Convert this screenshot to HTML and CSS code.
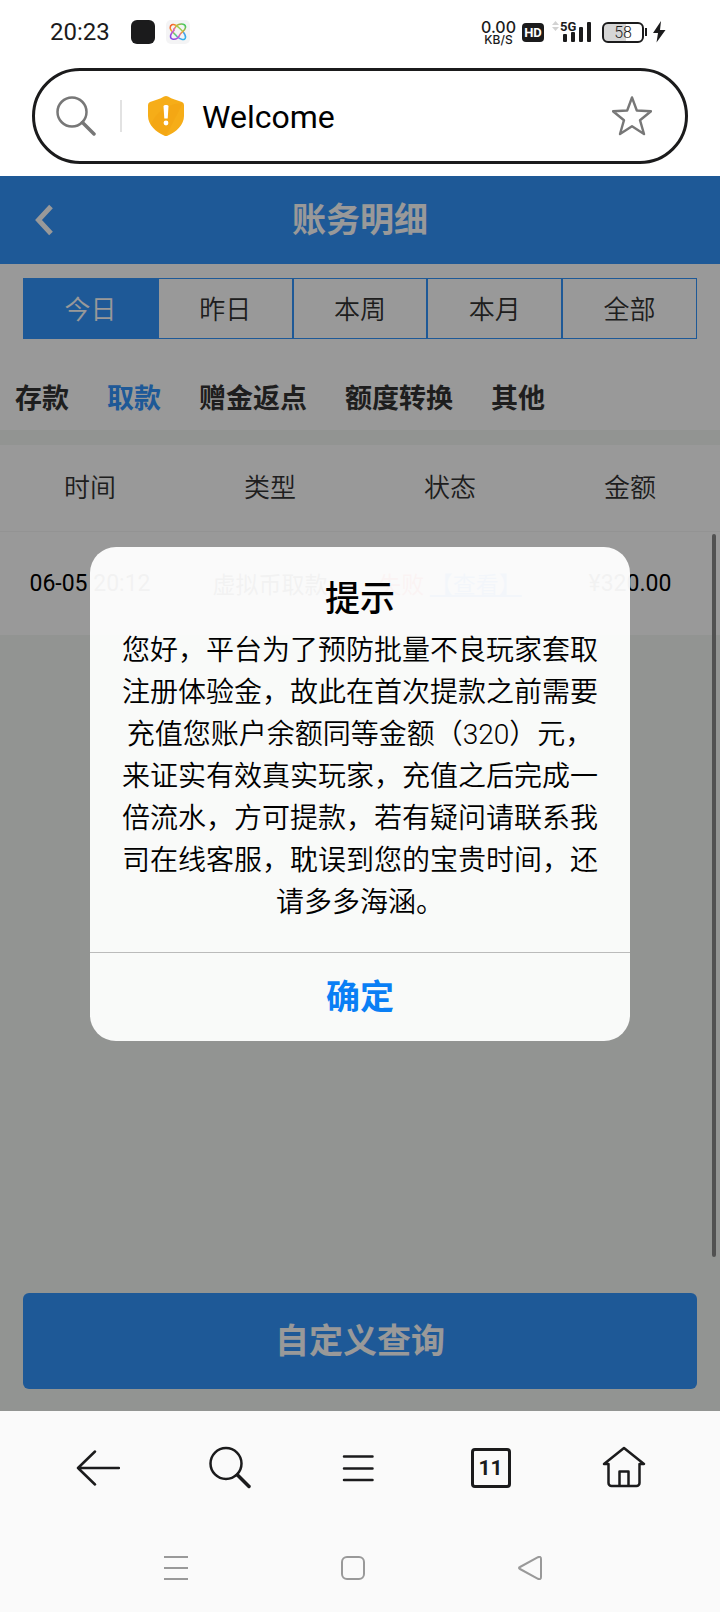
FILE: index.html
```html
<!DOCTYPE html>
<html lang="zh-CN">
<head>
<meta charset="utf-8">
<meta name="viewport" content="width=device-width, initial-scale=1">
<title>账务明细</title>
<link rel="stylesheet" href="styles.css">
</head>
<body>
<div class="status">
  <span class="clock">20:23</span>
  <span class="app-dot"></span>
  <svg class="app-icon" width="24" height="24" viewBox="0 0 24 24" fill="none">
    <defs><linearGradient id="rainbow" x1="4" y1="4" x2="20" y2="20" gradientUnits="userSpaceOnUse"><stop offset="0" stop-color="#f0402c"/><stop offset=".25" stop-color="#f5a52c"/><stop offset=".5" stop-color="#5fd08a"/><stop offset=".75" stop-color="#4a9df0"/><stop offset="1" stop-color="#20b8e8"/></linearGradient>
    <linearGradient id="violet" x1="5" y1="19" x2="19" y2="5" gradientUnits="userSpaceOnUse"><stop offset="0" stop-color="#7a45e8"/><stop offset=".4" stop-color="#d45ac8"/><stop offset=".65" stop-color="#f0a030"/><stop offset="1" stop-color="#3ecb60"/></linearGradient></defs>
    <rect width="24" height="24" rx="5" fill="#f4f4f5"/>
    <path d="M10 5.500C7 3.500 4 4.500 4.200 8C4.500 11 8 13 11 16.500C14 19.500 19 21 19.500 17.500C20 15 18 13 16.500 11" stroke="url(#rainbow)" stroke-width="1.600"/>
    <path d="M7 9.500C9.500 9 9 6 12 4.800C15 3.500 20 3.500 19.500 7.500C19 11 15.500 11.500 14 14.500C12.500 18 10 19.500 7 19.200C4 19 4 15.500 5.500 13.500C7 11.500 8 10.500 8.500 9.500" stroke="url(#violet)" stroke-width="1.600"/>
    <path d="M10 5.500C13 7 14.500 9.500 16.500 11" stroke="#9bcf50" stroke-width="1.500"/>
  </svg>
  <span class="speed"><b>0.00</b><small>KB/S</small></span>
  <span class="hd">HD</span>
  <svg class="signal" width="40" height="24" viewBox="0 0 40 24">
    <path d="M0 5l3.500-4L7 5zM0 7h7l-3.500 4z" fill="#d2d2d2"/>
    <text x="8" y="11" class="signal-text">5G</text>
    <g fill="#1b1b1c"><rect x="11" y="14" width="4" height="8" rx="1"/><rect x="19" y="12" width="4" height="10" rx="1"/><rect x="27" y="7" width="4" height="15" rx="1"/><rect x="35" y="2" width="4" height="20" rx="1"/></g>
  </svg>
  <span class="battery"><span>58</span></span>
  <svg width="14" height="22" viewBox="0 0 14 22"><path d="M9 0L1 12h5L4.500 21.500 13.500 9H8z" fill="#1b1b1c"/></svg>
</div>
<form class="address">
  <svg width="40" height="40" viewBox="0 0 40 40" fill="none" stroke="#777" stroke-width="2.500" stroke-linecap="round"><circle cx="16" cy="16" r="14.500"/><path d="M26.500 26.500L38 38" stroke-width="3.500"/></svg>
  <span class="rule"></span>
  <svg width="36" height="40" viewBox="0 0 36 40"><path d="M16 .6Q18-.4 20 .6C24 3 29 4.500 34 6Q36 7 36 9v11c0 9-8 16-16 19.400Q18 40.400 16 39.400C8 36 0 29 0 20V9Q0 7 2 6C7 4.500 12 3 16 .6z" fill="#f6ad18"/><path d="M3 28C8 17 17 8 35 7L18 40C10 36 5 32 3 28z" fill="#ed9d0c" opacity=".3"/><path d="M15.500 10.500q0-1.500 1.500-1.500h2q1.500 0 1.500 1.500l-.8 12h-3.400z" fill="#fff"/><circle cx="18" cy="27" r="2.400" fill="#fff"/></svg>
  <input class="url" type="text" value="Welcome" aria-label="地址栏">
  <button class="plain" type="button" aria-label="收藏"><svg width="40" height="40" viewBox="0 0 40 40" fill="none" stroke="#777" stroke-width="2.400" stroke-linejoin="round"><path d="M20 1.500L24.800 14.500 39 15.200 28 24.200 32 38 20 30.300 8 38 12 24.200 1 15.200 15.200 14.500z"/></svg></button>
</form>
<main class="page">
  <header class="title-bar">
    <button class="plain back" type="button" aria-label="返回"><svg width="18" height="32" viewBox="0 0 18 32" fill="none" stroke="#fff" stroke-width="5"><path d="M16 2.500L3.500 16 16 29.500"/></svg></button>
    <h1>账务明细</h1>
  </header>
  <section class="filters">
    <div class="dates">
      <button type="button" class="active">今日</button><button type="button">昨日</button><button type="button">本周</button><button type="button">本月</button><button type="button">全部</button>
    </div>
    <nav class="kinds">
      <a href="#">存款</a><a href="#" class="current">取款</a><a href="#">赠金返点</a><a href="#">额度转换</a><a href="#">其他</a>
    </nav>
  </section>
  <table class="records">
    <thead><tr><th>时间</th><th>类型</th><th>状态</th><th>金额</th></tr></thead>
    <tbody><tr><td>06-05 20:12</td><td>虚拟币取款</td><td><span class="failed">失败</span> <a href="#">【查看】</a></td><td>¥320.00</td></tr></tbody>
  </table>
  <footer class="query"><button type="button">自定义查询</button></footer>
  <span class="scroll-thumb"></span>
  <div class="mask">
    <div class="dialog" role="alertdialog" aria-labelledby="tip-title" aria-describedby="tip-text">
      <h2 id="tip-title">提示</h2>
      <p id="tip-text">您好，平台为了预防批量不良玩家套取注册体验金，故此在首次提款之前需要充值您账户余额同等金额（320）元，来证实有效真实玩家，充值之后完成一倍流水，方可提款，若有疑问请联系我司在线客服，耽误到您的宝贵时间，还请多多海涵。</p>
      <button type="button">确定</button>
    </div>
  </div>
</main>
<nav class="toolbar">
  <button class="plain" type="button" aria-label="后退"><svg width="44" height="44" viewBox="0 0 44 44"><path d="M43 22H2M19 5.500L2 22l17 16.500"/></svg></button>
  <button class="plain" type="button" aria-label="搜索"><svg width="44" height="44" viewBox="0 0 44 44"><circle cx="18" cy="17.500" r="15.500"/><path d="M29.500 29L41 40.500" stroke-width="3.500"/></svg></button>
  <button class="plain" type="button" aria-label="菜单"><svg width="44" height="44" viewBox="0 0 44 44"><path d="M5 10.500h28.500M5 22.500h28.500M5 34h28.500"/></svg></button>
  <button class="plain" type="button" aria-label="标签页"><span class="tab-count">11</span></button>
  <button class="plain" type="button" aria-label="主页"><svg width="44" height="44" viewBox="0 0 44 44"><path d="M2 18L22 2l20 16h-4.500v19a3 3 0 0 1-3 3h-25a3 3 0 0 1-3-3V18zM17.500 40V25.500h9V40"/></svg></button>
</nav>
<nav class="system">
  <button class="plain" type="button" aria-label="最近任务"><svg width="24" height="24" viewBox="0 0 24 24"><path d="M0 1h24M0 12h24M0 23h24"/></svg></button>
  <button class="plain" type="button" aria-label="桌面"><svg width="24" height="24" viewBox="0 0 24 24"><rect x="1" y="1" width="22" height="22" rx="5"/></svg></button>
  <button class="plain" type="button" aria-label="返回上一级"><svg width="24" height="24" viewBox="0 0 24 24"><path d="M2 11L20 1.200Q23 0 23 3v18q0 3-3 1.800L2 13Q0 12 2 11z"/></svg></button>
</nav>
</body>
</html>
```
FILE: styles.css
```css
* { box-sizing: border-box; }

body {
  margin: 0;
  min-height: 100vh;
  display: flex;
  flex-direction: column;
  background: #fff;
  color: #000;
  font-family: Roboto, "Noto Sans CJK SC", sans-serif;
}

button, input { font: inherit; color: inherit; }
svg { display: block; flex: none; }
a { color: inherit; text-decoration: none; }

.plain {
  flex: none;
  padding: 0;
  border: 0;
  background: none;
}

/* Status bar */
.status {
  display: flex;
  align-items: center;
  height: 68px;
  padding: 0 54px 4px 50px;
  color: #1b1b1c;
}
.clock { font-size: 24px; }
.app-dot {
  width: 24px;
  height: 24px;
  margin-left: 21px;
  border-radius: 6px;
  background: #1b1b1c;
}
.app-icon { margin-left: 11px; }
.speed {
  display: flex;
  flex-direction: column;
  align-items: center;
  margin-left: auto;
  padding-top: 2px;
  font-family: Inter, sans-serif;
}
.speed b { font-size: 16px; font-weight: 500; line-height: 14px; }
.speed small { font-size: 12px; font-weight: 500; line-height: 12px; }
.hd {
  width: 22px;
  margin-left: 6px;
  border-radius: 4px;
  background: #1b1b1c;
  color: #fff;
  font-size: 13px;
  font-weight: 700;
  line-height: 19px;
  text-align: center;
}
.signal { margin-left: 8px; }
.signal-text { font: 700 13px Roboto, sans-serif; fill: #1b1b1c; }
.battery {
  display: flex;
  align-items: center;
  margin: 0 5px 0 10px;
}
.battery span {
  width: 42px;
  border: 2px solid #1b1b1c;
  border-radius: 6px;
  background: linear-gradient(90deg, #d6d6d6 58%, #fff 58%);
  font-size: 16px;
  font-weight: 300;
  line-height: 17px;
  text-align: center;
}
.battery::after {
  content: "";
  width: 2px;
  height: 8px;
  margin-left: 1px;
  background: #1b1b1c;
}

/* Address bar */
.address {
  display: flex;
  align-items: center;
  height: 96px;
  margin: 0 32px 12px;
  padding: 0 33px 0 21px;
  border: 3px solid #1b1b1c;
  border-radius: 48px;
}
.rule {
  width: 2px;
  height: 32px;
  margin: 0 26px 0 24px;
  background: #e2e2e2;
}
.url {
  flex: 1;
  min-width: 0;
  margin-left: 18px;
  padding: 2px 0 0;
  border: 0;
  outline: 0;
  background: none;
  font-size: 32px;
}

/* Page */
.page {
  position: relative;
  flex: 1;
  display: flex;
  flex-direction: column;
  background: #f4f7f4;
}
.title-bar {
  display: grid;
  grid-template-columns: 1fr auto 1fr;
  align-items: center;
  height: 88px;
  padding: 0 35px;
  background: #3394fc;
  color: #fff;
}
.title-bar h1 {
  margin: 0;
  font-size: 34px;
  font-weight: 700;
  line-height: 48px;
}
.back { justify-self: start; }
.filters {
  padding: 14px 0 11px;
  background: #fff;
}
.dates {
  display: grid;
  grid-template-columns: repeat(5, 1fr);
  margin: 0 23px;
}
.dates button {
  height: 61px;
  padding: 0 0 2px;
  border: 1px solid #3394fc;
  border-radius: 0;
  background: #fff;
  color: #333;
  font-size: 26px;
  font-weight: 350;
}
.dates .active { background: #3394fc; color: #fff; }
.kinds {
  display: flex;
  gap: 38px;
  padding: 40px 15px 0;
  color: #333;
  font-size: 27px;
  font-weight: 700;
  line-height: 40px;
}
.kinds .current { color: #3394fc; }

.records {
  width: 100%;
  margin-top: 15px;
  border-collapse: collapse;
  table-layout: fixed;
  background: #fff;
  text-align: center;
}
.records th, .records td { padding: 0; }
.records th {
  height: 86px;
  padding-bottom: 4px;
  border-bottom: 1px solid #f5f5f5;
  color: #333;
  font-size: 26px;
  font-weight: 350;
}
.records td {
  height: 104px;
  font-size: 23px;
  white-space: nowrap;
}
.records a { color: #3394fc; text-decoration: underline; }
.failed { color: #f33; }

.query { margin: auto 23px 22px; }
.query button {
  width: 100%;
  height: 96px;
  padding: 0 0 6px;
  border: 0;
  border-radius: 6px;
  background: #3394fc;
  color: #fff;
  font-size: 34px;
  font-weight: 700;
}
.scroll-thumb {
  position: absolute;
  top: 358px;
  right: 4px;
  bottom: 154px;
  width: 4px;
  border-radius: 2px;
  background: #888;
}

/* Dialog over the page */
.mask {
  position: absolute;
  inset: 0;
  display: flex;
  align-items: center;
  justify-content: center;
  background: rgba(0, 0, 0, .4);
}
.dialog {
  width: 75%;
  padding-top: 28px;
  border-radius: 26px;
  background: rgba(255, 255, 255, .95);
  text-align: center;
}
.dialog h2 {
  margin: 0;
  font-size: 35px;
  font-weight: 500;
  line-height: 50px;
}
.dialog p {
  margin: 5px 30px 28px;
  font-size: 28px;
  font-weight: 350;
  line-height: 42px;
}
.dialog button {
  width: 100%;
  height: 89px;
  padding: 0 0 4px;
  border: 0;
  border-top: 1px solid #bbb;
  background: none;
  color: #0a7ff5;
  font-size: 34px;
  font-weight: 700;
}

/* Browser toolbar and system navigation */
.toolbar {
  display: flex;
  align-items: center;
  justify-content: space-between;
  height: 113px;
  padding: 0 74px 0 76px;
  background: #fafafa;
}
.toolbar svg {
  fill: none;
  stroke: #1b1b1c;
  stroke-width: 2.5;
  stroke-linecap: round;
  stroke-linejoin: round;
}
.tab-count {
  display: block;
  width: 40px;
  margin: 0 4px 0 0;
  border: 3px solid #1b1b1c;
  border-radius: 4px;
  color: #1b1b1c;
  font-size: 21px;
  font-weight: 700;
  line-height: 34px;
  text-align: center;
}
.system {
  display: flex;
  align-items: center;
  justify-content: space-between;
  height: 88px;
  padding: 0 178px 0 164px;
  background: #fafafa;
}
.system svg { fill: none; stroke: #999; stroke-width: 2; }
```
